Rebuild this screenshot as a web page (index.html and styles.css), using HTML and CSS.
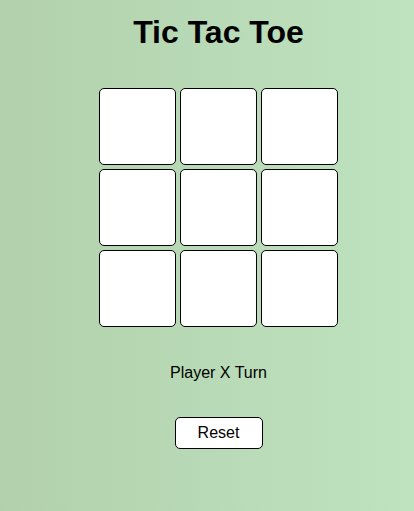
FILE: index.html
```html
<!DOCTYPE html>
<html lang="en">
<head>
<meta charset="utf-8">
<title>Tic Tac Toe</title>
<link rel="stylesheet" href="styles.css">
</head>
<body>
<main class="app">
  <h1 class="title">Tic Tac Toe</h1>
  <div class="board">
    <div class="cell"></div><div class="cell"></div><div class="cell"></div>
    <div class="cell"></div><div class="cell"></div><div class="cell"></div>
    <div class="cell"></div><div class="cell"></div><div class="cell"></div>
  </div>
  <p class="status">Player X Turn</p>
  <button class="reset" type="button">Reset</button>
</main>
</body>
</html>
```
FILE: styles.css
```css
html, body {
  margin: 0;
  height: 100%;
}
body {
  background: linear-gradient(90deg, #b2d0ac 0%, #bfe3bf 100%);
  font-family: "Liberation Sans", Arial, sans-serif;
  color: #000;
}
.app {
  display: flex;
  flex-direction: column;
  align-items: center;
  padding: 14px 0 0 23px;
}
.title {
  margin: 0;
  font-size: 32px;
  line-height: 37px;
  font-weight: bold;
}
.board {
  margin-top: 37px;
  display: grid;
  grid-template-columns: repeat(3, 77px);
  grid-template-rows: repeat(3, 77px);
  gap: 4px;
}
.cell {
  box-sizing: border-box;
  background: #fff;
  border: 1px solid #000;
  border-radius: 5px;
}
.status {
  margin: 37px 0 0;
  font-size: 16px;
  line-height: 18px;
}
.reset {
  margin-top: 35px;
  box-sizing: border-box;
  width: 88px;
  height: 32px;
  padding: 0;
  background: #fff;
  border: 1px solid #000;
  border-radius: 5px;
  font-family: "Liberation Sans", Arial, sans-serif;
  font-size: 16px;
  color: #000;
}
```
